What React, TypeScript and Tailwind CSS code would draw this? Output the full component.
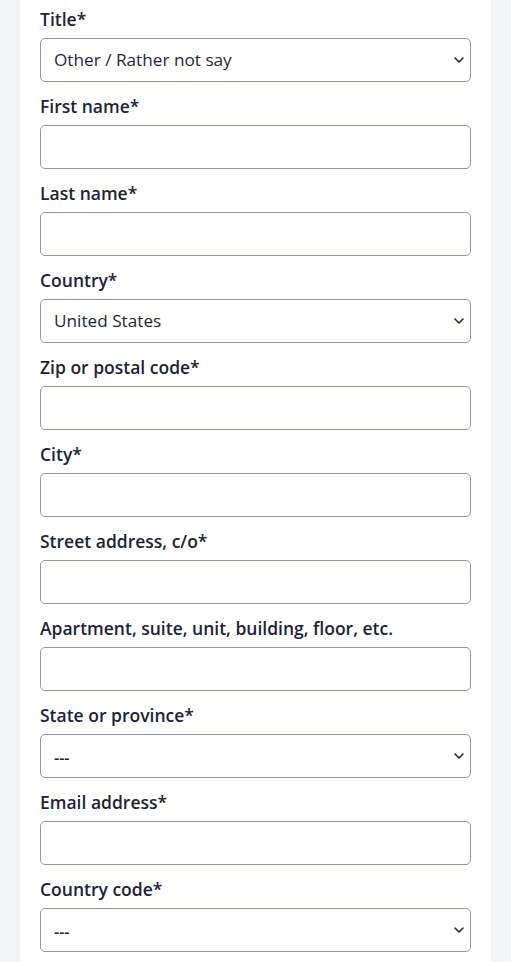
import React from "react";

const Chevron = () => (
  <svg width="10" height="6" viewBox="0 0 10 6" className="absolute right-[6px] top-1/2 -translate-y-1/2" fill="none">
    <path d="M1 1l4 4 4-4" stroke="#1c2642" strokeWidth="1.6" strokeLinecap="round" strokeLinejoin="round" />
  </svg>
);

type Field = { label: string; type: "select" | "input"; value?: string; dash?: boolean };

const fields: Field[] = [
  { label: "Title*", type: "select", value: "Other / Rather not say" },
  { label: "First name*", type: "input" },
  { label: "Last name*", type: "input" },
  { label: "Country*", type: "select", value: "United States" },
  { label: "Zip or postal code*", type: "input" },
  { label: "City*", type: "input" },
  { label: "Street address, c/o*", type: "input" },
  { label: "Apartment, suite, unit, building, floor, etc.", type: "input" },
  { label: "State or province*", type: "select", value: "---", dash: true },
  { label: "Email address*", type: "input" },
  { label: "Country code*", type: "select", value: "---", dash: true },
];

export default function App() {
  return (
    <div className="w-[511px] h-[962px] bg-[#f3f6f9] px-[20px] overflow-hidden" style={{ fontFamily: '"Open Sans", "Noto Sans", sans-serif' }}>
      <div className="bg-white h-full px-[20px] pt-[8px] flex flex-col gap-[13px]">
        {fields.map((f) => (
          <div key={f.label} className="flex flex-col gap-[8px]">
            <div className="text-[17.5px] leading-[22px] font-semibold text-[#1c2338]">{f.label}</div>
            <div className="relative h-[44px] rounded-[5px] border-[1.5px] border-[#8f99ab] bg-white flex items-center pl-[13px]">
              {f.type === "select" && (
                <>
                  <span className={f.dash ? "text-[16px] text-[#1c2642] font-semibold pt-[3px]" : "text-[17.2px] text-[#1c2642]"}>{f.value}</span>
                  <Chevron />
                </>
              )}
            </div>
          </div>
        ))}
      </div>
    </div>
  );
}
